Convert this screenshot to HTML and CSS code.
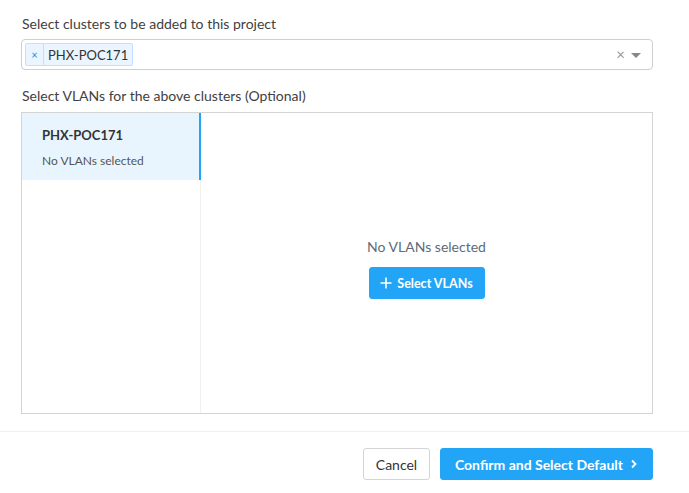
FILE: index.html
```html
<!DOCTYPE html>
<html>
<head>
<meta charset="utf-8">
<link rel="stylesheet" href="styles.css">
</head>
<body>
<div class="content">
  <div class="label">Select clusters to be added to this project</div>
  <div class="select">
    <div class="tags">
      <span class="tag"><span class="tag-x">×</span><span class="tag-text">PHX-POC171</span></span>
    </div>
    <span class="clear">×</span>
    <span class="arrow"></span>
  </div>
  <div class="label label2">Select VLANs for the above clusters (Optional)</div>
  <div class="panel">
    <div class="side">
      <div class="item active">
        <div class="item-title">PHX-POC171</div>
        <div class="item-sub">No VLANs selected</div>
      </div>
    </div>
    <div class="main">
      <div class="empty">No VLANs selected</div>
      <button class="btn btn-primary btn-sm"><svg class="plus" width="12" height="12" viewBox="0 0 12 12"><path d="M6 0.5V11.5M0.5 6H11.5" stroke="#fff" stroke-width="1.6" fill="none"/></svg>Select VLANs</button>
    </div>
  </div>
</div>
<div class="footer">
  <button class="btn btn-default">Cancel</button>
  <button class="btn btn-primary btn-lg">Confirm and Select Default<svg class="chev" width="8" height="10" viewBox="0 0 8 10"><path d="M2 1.5L5.5 5L2 8.5" stroke="#fff" stroke-width="1.8" fill="none"/></svg></button>
</div>
</body>
</html>
```
FILE: styles.css
```css
* { box-sizing: border-box; }
body {
  margin: 0;
  background: #fff;
  font-family: Lato, "Open Sans", sans-serif;
  font-size: 14px;
  color: #3d3d3d;
}
.content {
  padding: 15px 36px 0 21px;
}
.label {
  line-height: 17px;
  margin-left: 1px;
  color: #414141;
  font-size: 14px;
}
.label2 {
  margin-top: 17px;
}
.select {
  margin-top: 7px;
  height: 31px;
  border: 1px solid #cfcfcf;
  border-radius: 4px;
  display: flex;
  align-items: center;
  padding: 0 11px 0 3px;
}
.tags {
  flex: 1;
  display: flex;
}
.tag {
  display: inline-flex;
  align-items: center;
  height: 23px;
  background: #ebf5ff;
  border: 1px solid #c2e0ff;
  border-radius: 2px;
  color: #333;
}
.tag-x {
  width: 18px;
  text-align: center;
  color: #1c8ee0;
  font-size: 11px;
  line-height: 21px;
  border-right: 1px solid #c2e0ff;
  height: 21px;
}
.tag-text {
  padding: 0 4px 0 4px;
  font-size: 13px;
}
.clear {
  color: #999;
  font-size: 15px;
  margin-right: 6px;
  line-height: 1;
}
.arrow {
  width: 0;
  height: 0;
  border-left: 5px solid transparent;
  border-right: 5px solid transparent;
  border-top: 5px solid #888;
  margin-top: 2px;
}
.panel {
  margin-top: 8px;
  height: 302px;
  border: 1px solid #d4d4d4;
  display: flex;
}
.side {
  width: 179px;
  border-right: 1px solid #f0f0f0;
}
.item {
  height: 67px;
  padding: 14px 0 0 20px;
}
.item.active {
  background: #e9f5fe;
  border-right: 2px solid #22a5f7;
  margin-right: -1px;
}
.item-title {
  font-weight: bold;
  font-size: 13px;
  color: #333;
  line-height: 17px;
}
.item-sub {
  font-size: 12px;
  color: #555;
  margin-top: 9px;
  line-height: 15px;
}
.main {
  flex: 1;
  display: flex;
  flex-direction: column;
  align-items: center;
  padding-top: 125px;
}
.empty {
  color: #5d6b7b;
  font-size: 14px;
  line-height: 17px;
}
.btn {
  font-family: Lato, "Open Sans", sans-serif;
  border-radius: 3px;
  cursor: pointer;
  display: inline-flex;
  align-items: center;
  justify-content: center;
}
.btn-primary {
  background: #22a5f7;
  border: 1px solid #22a5f7;
  color: #fff;
  font-weight: bold;
}
.btn-sm {
  margin-top: 12px;
  height: 32px;
  width: 116px;
  font-size: 12.5px;
  padding: 0;
}
.plus { margin-right: 5px; }
.footer {
  margin-top: 17px;
  border-top: 1px solid #f0f0f0;
  padding: 16px 36px 0 0;
  display: flex;
  justify-content: flex-end;
  gap: 10px;
}
.btn-default {
  height: 32px;
  width: 67px;
  background: #fff;
  border: 1px solid #d4d4d4;
  color: #333;
  font-size: 14px;
}
.btn-lg {
  height: 32px;
  width: 213px;
  font-size: 14px;
}
.chev { margin-left: 7px; }
```
